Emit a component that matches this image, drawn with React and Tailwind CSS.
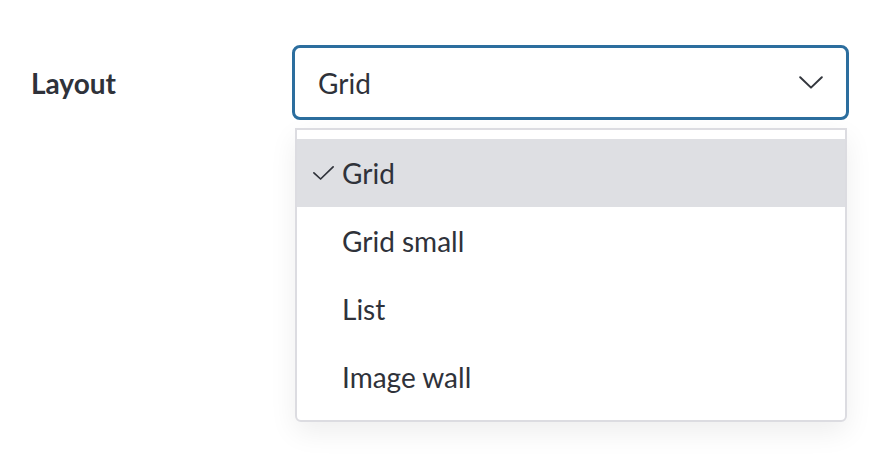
import React from "react";

const options = ["Grid", "Grid small", "List", "Image wall"];

function Check() {
  return (
    <svg width="21" height="14" viewBox="0 0 21 14" fill="none">
      <path d="M0.9 6.8 L7.6 13 L20.1 0.9" stroke="#2f323a" strokeWidth="1.7" strokeLinecap="round" strokeLinejoin="round" />
    </svg>
  );
}

function Chevron() {
  return (
    <svg width="24" height="13" viewBox="0 0 24 13" fill="none">
      <path d="M1.2 1.2 L12 11.6 L22.8 1.2" stroke="#33363d" strokeWidth="2" strokeLinecap="round" strokeLinejoin="round" />
    </svg>
  );
}

export default function App() {
  return (
    <div
      className="w-[870px] h-[468px] bg-white text-[#2f323a] overflow-hidden"
      style={{ fontFamily: "Lato, 'Liberation Sans', sans-serif" }}
    >
      <div className="flex items-start pt-[45px]">
        <div className="w-[292px] pl-[31px] h-[75px] flex items-center shrink-0">
          <span className="text-[28px] font-bold leading-none">Layout</span>
        </div>
        <div className="w-[557px] shrink-0">
          <div className="h-[75px] border-[3px] border-[#2c6e9e] rounded-[8px] flex items-center justify-between pl-[23px] pr-[23px] bg-white">
            <span className="text-[28px] leading-none">Grid</span>
            <Chevron />
          </div>
          <div className="mt-[8px] ml-[3px] mr-[2px] border-2 border-[#dcdce1] rounded-b-[6px] bg-white py-[9px] shadow-[0_10px_28px_rgba(0,0,0,0.07)]">
            {options.map((o, i) => (
              <div
                key={o}
                className={`h-[68px] flex items-center pl-[16px] ${i === 0 ? "bg-[#dedfe3]" : ""}`}
              >
                <div className="w-[29px] flex items-center">{i === 0 ? <Check /> : null}</div>
                <span className="text-[28px] leading-none">{o}</span>
              </div>
            ))}
          </div>
        </div>
      </div>
    </div>
  );
}
